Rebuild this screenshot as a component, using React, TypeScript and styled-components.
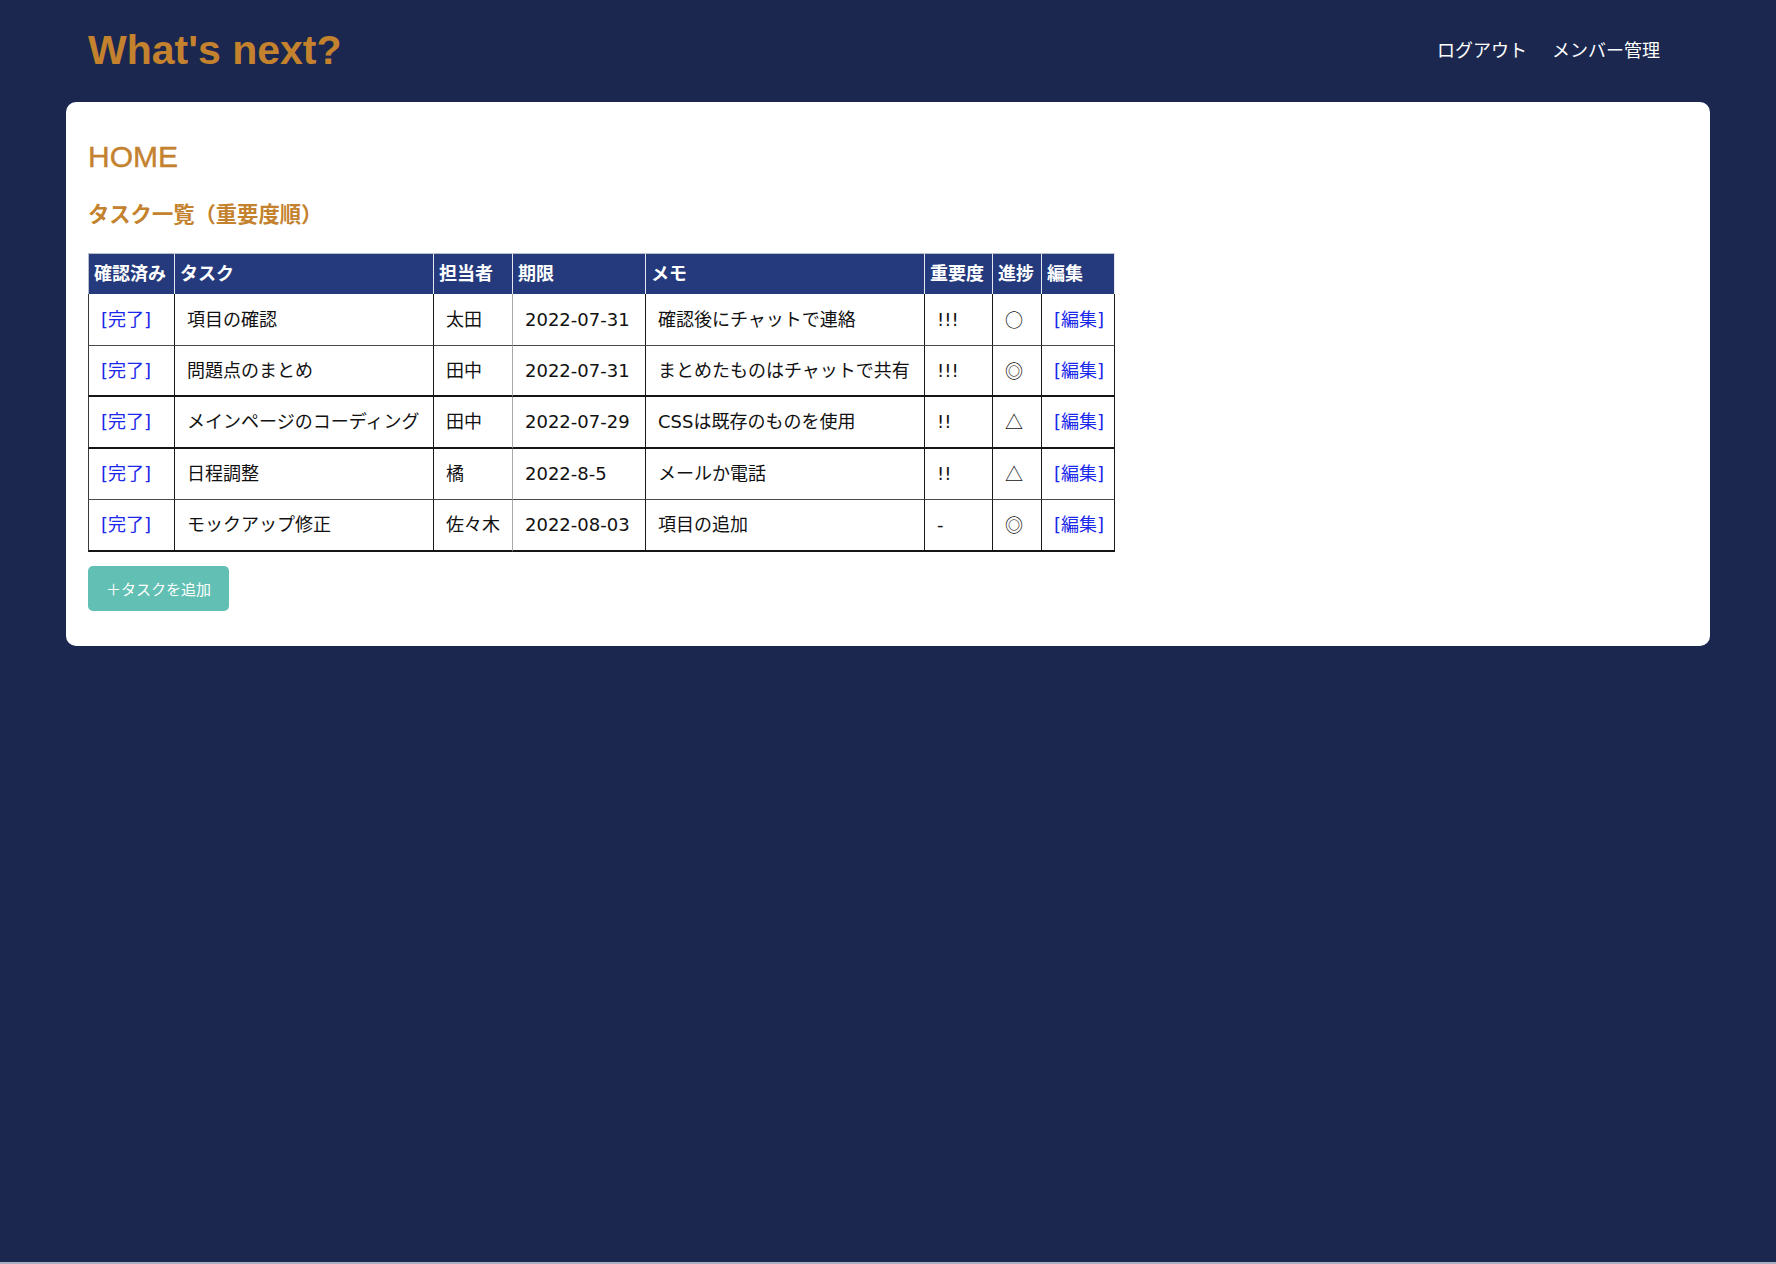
import React from "react";
import styled, { createGlobalStyle } from "styled-components";

const GlobalStyle = createGlobalStyle`
  *, *::before, *::after { box-sizing: border-box; }
  html { background: #aab0c2; }
  body {
    margin: 0;
    min-height: calc(100vh - 2px);
    background: #1b274e;
    font-family: "DejaVu Sans", "Noto Sans CJK JP", sans-serif;
  }
`;

const Header = styled.header`
  height: 102px;
  display: flex;
  align-items: center;
  justify-content: space-between;
  padding: 0 116px 3px 88px;
`;

const Logo = styled.h1`
  margin: 0;
  font-family: "Liberation Sans", Arial, sans-serif;
  font-weight: 700;
  font-size: 41px;
  line-height: 46px;
  color: #c4822e;
`;

const Nav = styled.nav`
  display: flex;
  gap: 25px;
  margin-bottom: 2px;
`;

const NavLink = styled.a`
  color: #ffffff;
  text-decoration: none;
  font-family: "Noto Sans CJK JP", sans-serif;
  font-size: 18px;
  line-height: 22px;
`;

const Card = styled.main`
  margin: 0 66px;
  background: #ffffff;
  border-radius: 10px;
  padding: 37px 22px 35px;
`;

const PageTitle = styled.h2`
  margin: 0 0 25px;
  font-family: "Liberation Sans", Arial, sans-serif;
  font-weight: 400;
  font-size: 30px;
  line-height: 36px;
  color: #c4822e;
  -webkit-text-stroke: 0.4px #c4822e;
`;

const SectionTitle = styled.h3`
  margin: 0 0 27px;
  font-family: "Noto Sans CJK JP", sans-serif;
  font-weight: 700;
  font-size: 21.3px;
  line-height: 26px;
  color: #c4822e;
`;

const Table = styled.table`
  border-collapse: separate;
  border-spacing: 0;
  table-layout: fixed;
  width: 1027px;
  font-size: 18px;
  line-height: 22px;
`;

const HeadCell = styled.th<{ $w: number; $first?: boolean }>`
  width: ${(p) => p.$w}px;
  height: 41px;
  padding: 0 5px;
  background: #243a7c;
  color: #ffffff;
  font-weight: 700;
  text-align: left;
  white-space: nowrap;
  overflow: hidden;
  border-top: 1px solid #b8bdcc;
  border-right: 1px solid #e4e6ee;
  border-left: ${(p) => (p.$first ? "1px solid #b8bdcc" : "0")};
`;

const Row = styled.tr<{ $h: number; $strong?: boolean }>`
  & > td {
    height: ${(p) => p.$h}px;
    border-bottom: ${(p) => (p.$strong ? "2px solid #151515" : "1px solid #4a4a4a")};
  }
`;

const Cell = styled.td<{ $first?: boolean; $soft?: boolean }>`
  padding: 0 12px;
  color: #111111;
  white-space: nowrap;
  overflow: hidden;
  vertical-align: middle;
  border-right: 1px solid ${(p) => (p.$soft ? "#aaaaaa" : "#1a1a1a")};
  border-left: ${(p) => (p.$first ? "1px solid #3a3a3a" : "0")};
`;

const Mark = styled.span`
  font-family: "Noto Sans CJK JP", sans-serif;
`;

const ActionLink = styled.a`
  color: #1a28ea;
  text-decoration: none;
`;

const AddButton = styled.button`
  margin-top: 14px;
  height: 45px;
  padding: 0 18px;
  border: none;
  border-radius: 5px;
  background: #62bfb3;
  color: #ffffff;
  font-family: "Noto Sans CJK JP", sans-serif;
  font-size: 15px;
  line-height: 20px;
`;

const columns: { label: string; w: number }[] = [
  { label: "確認済み", w: 87 },
  { label: "タスク", w: 259 },
  { label: "担当者", w: 79 },
  { label: "期限", w: 133 },
  { label: "メモ", w: 279 },
  { label: "重要度", w: 68 },
  { label: "進捗", w: 49 },
  { label: "編集", w: 73 },
];

type Task = {
  task: string;
  owner: string;
  due: string;
  memo: string;
  priority: string;
  progress: string;
};

const tasks: Task[] = [
  { task: "項目の確認", owner: "太田", due: "2022-07-31", memo: "確認後にチャットで連絡", priority: "!!!", progress: "○" },
  { task: "問題点のまとめ", owner: "田中", due: "2022-07-31", memo: "まとめたものはチャットで共有", priority: "!!!", progress: "◎" },
  { task: "メインページのコーディング", owner: "田中", due: "2022-07-29", memo: "CSSは既存のものを使用", priority: "!!", progress: "△" },
  { task: "日程調整", owner: "橘", due: "2022-8-5", memo: "メールか電話", priority: "!!", progress: "△" },
  { task: "モックアップ修正", owner: "佐々木", due: "2022-08-03", memo: "項目の追加", priority: "-", progress: "◎" },
];

export default function App() {
  return (
    <>
      <GlobalStyle />
      <Header>
        <Logo>What's next?</Logo>
        <Nav>
          <NavLink href="#">ログアウト</NavLink>
          <NavLink href="#">メンバー管理</NavLink>
        </Nav>
      </Header>
      <Card>
        <PageTitle>HOME</PageTitle>
        <SectionTitle>タスク一覧（重要度順）</SectionTitle>
        <Table>
          <thead>
            <tr>
              {columns.map((c, i) => (
                <HeadCell key={c.label} $w={c.w} $first={i === 0}>
                  {c.label}
                </HeadCell>
              ))}
            </tr>
          </thead>
          <tbody>
            {tasks.map((t, i) => (
              <Row key={i} $h={i % 2 === 0 ? 52 : 51} $strong={i === 1 || i === 2 || i === 4}>
                <Cell $first>
                  <ActionLink href="#">[完了]</ActionLink>
                </Cell>
                <Cell>{t.task}</Cell>
                <Cell $soft>{t.owner}</Cell>
                <Cell>{t.due}</Cell>
                <Cell>{t.memo}</Cell>
                <Cell>{t.priority}</Cell>
                <Cell>
                  <Mark>{t.progress}</Mark>
                </Cell>
                <Cell>
                  <ActionLink href="#">[編集]</ActionLink>
                </Cell>
              </Row>
            ))}
          </tbody>
        </Table>
        <AddButton type="button">＋タスクを追加</AddButton>
      </Card>
    </>
  );
}
